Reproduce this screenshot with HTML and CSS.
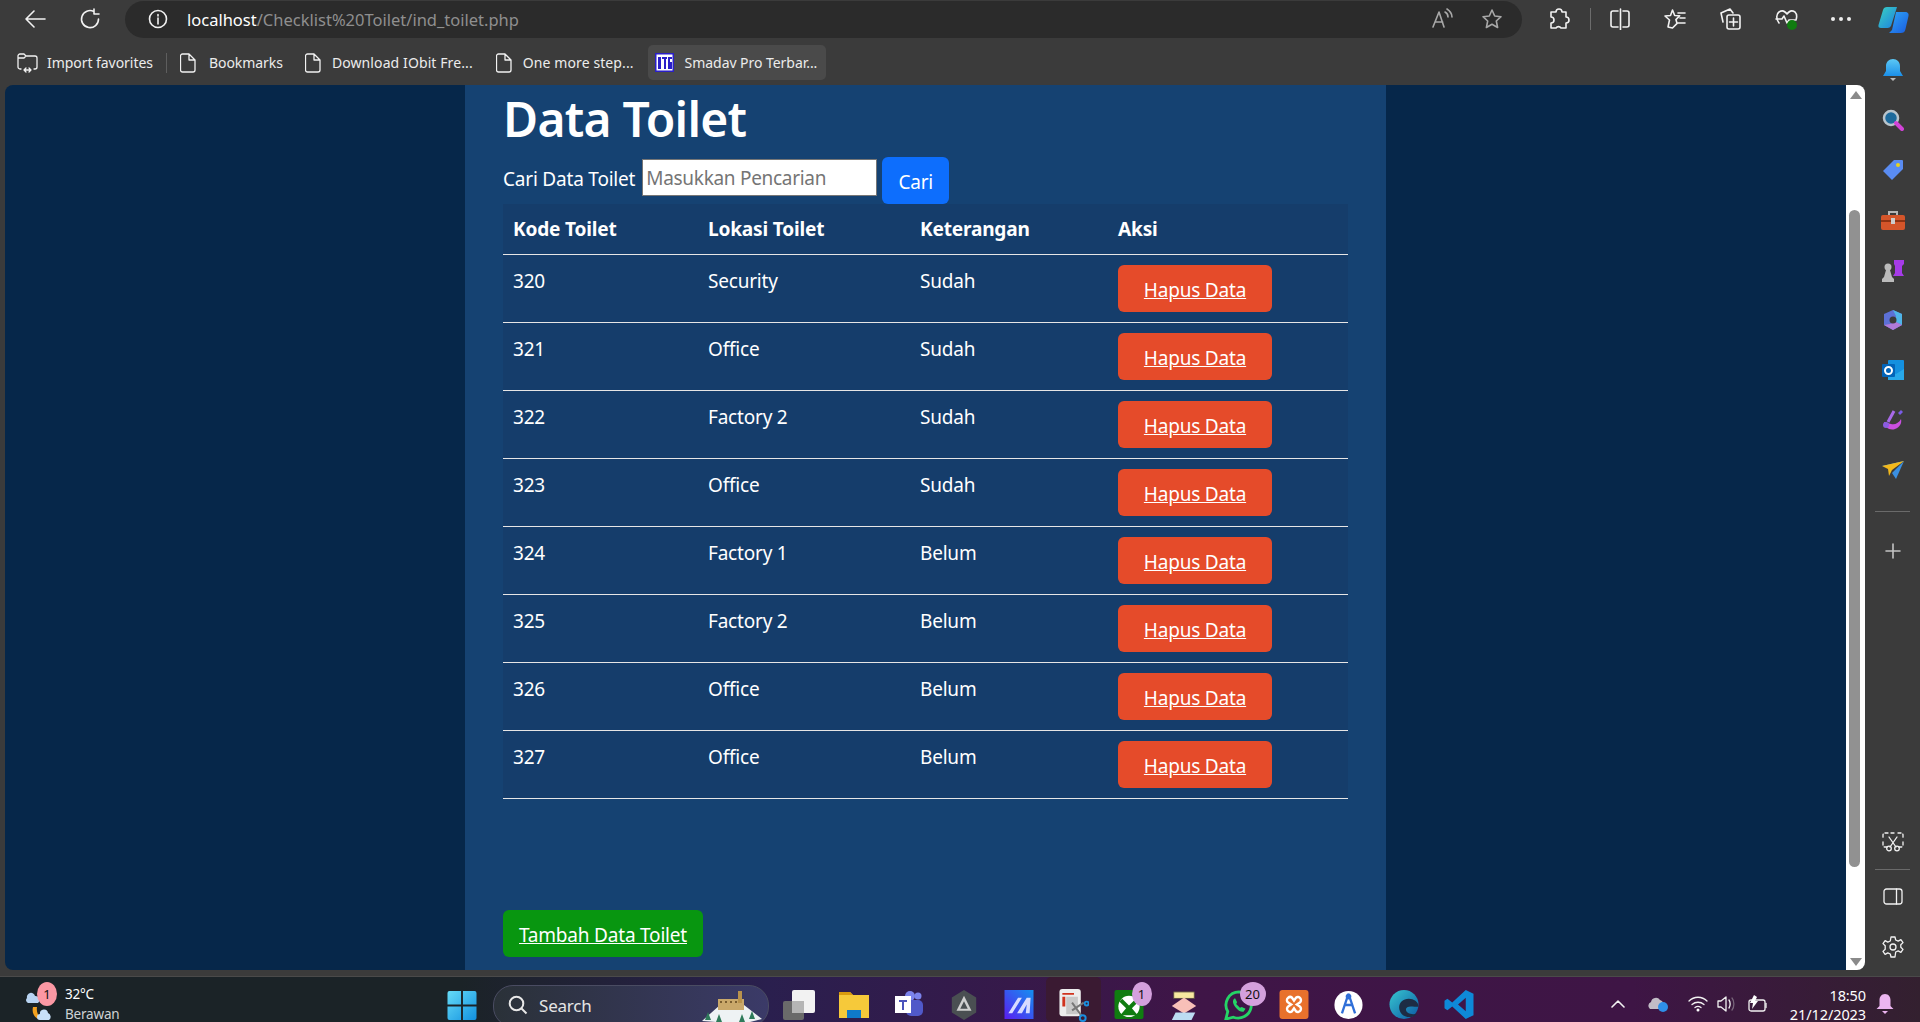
FILE: index.html
```html
<!DOCTYPE html>
<html lang="id">
<head>
<meta charset="utf-8">
<title>Data Toilet</title>
<link rel="stylesheet" href="styles.css">
</head>
<body>
<header class="toolbar">
  <button class="tb-btn nav-back"><svg width="22" height="20" viewBox="0 0 22 20"><path d="M10 2 2 10l8 8M2 10h19" class="ln"/></svg></button>
  <button class="tb-btn nav-reload"><svg width="22" height="22" viewBox="0 0 22 22"><path d="M15 3.600A8.500 8.500 0 1 0 19.500 11M15 1v5h5" class="ln"/></svg></button>
  <div class="address">
    <svg class="addr-info" width="20" height="20" viewBox="0 0 20 20"><circle cx="10" cy="10" r="8.500" class="ln"/><path d="M10 9v6M10 5.500v1.500" class="ln"/></svg>
    <span class="url"><span class="host">localhost</span>/Checklist%20Toilet/ind_toilet.php</span>
    <div class="addr-tools">
      <svg width="22" height="22" viewBox="0 0 22 22"><path d="M2 19 8 4l5 15M4.200 14h7.500M14 4c2 1 3 3 3 5M16 1c3 2 5 5 5 8" class="ln dim"/></svg>
      <svg width="22" height="22" viewBox="0 0 22 22"><path d="m11 2 2.700 6 6.300.7-4.700 4.300 1.300 6.500L11 16.300 5.400 19.500 6.700 13 2 8.700 8.300 8z" class="ln dim"/></svg>
    </div>
  </div>
  <div class="tools">
    <svg width="22" height="22" viewBox="0 0 22 22"><path d="M8 4a3 3 0 0 1 6 0h4v5a3 3 0 0 1 0 6v5h-5a3 3 0 0 0-5 0H3v-5a3 3 0 0 0 0-6V4z" class="ln"/></svg>
    <span class="tool-sep"></span>
    <svg width="22" height="22" viewBox="0 0 22 22"><path d="M9 3H4a2 2 0 0 0-2 2v12a2 2 0 0 0 2 2h5M14 3h4a2 2 0 0 1 2 2v12a2 2 0 0 1-2 2h-4M11.500 1v21" class="ln"/></svg>
    <svg width="24" height="24" viewBox="0 0 24 24"><path d="m9.500 3 2.200 5.500 5 .3-3.800 3.800 1.200 3.800L9.500 21 5 20l1.500-7L2 9l5.500-.5zM15 6h7M17 11h5M15 16h7" class="ln"/></svg>
    <svg width="24" height="24" viewBox="0 0 24 24"><path d="M4 15 2 6l9-4 3 4M8 10a2 2 0 0 1 2-2h9a2 2 0 0 1 2 2v10a2 2 0 0 1-2 2h-9a2 2 0 0 1-2-2zM14.500 11v8M10.500 15h8" class="ln"/></svg>
    <svg width="24" height="24" viewBox="0 0 24 24"><path d="M4 16C1 12 1 7 4 5c3-2 6-1 8 2 2-3 5-4 8-2 2 2 2 5 1 8M1 12h6l2-3 3 7 2-3h6" class="ln"/><circle cx="17" cy="18" r="5" fill="#107c10"/></svg>
    <span class="dots"><i></i><i></i><i></i></span>
    <svg class="copilot" width="31" height="27" viewBox="0 0 31 27"><defs><linearGradient id="cp1" x1="0" y1="0" x2="1" y2="1"><stop offset="0" stop-color="#3ad1c2"/><stop offset="1" stop-color="#1c7fe0"/></linearGradient><linearGradient id="cp2" x1="0" y1="0" x2="1" y2="1"><stop offset="0" stop-color="#2fa8f5"/><stop offset="1" stop-color="#1a5be0"/></linearGradient></defs><path d="M9 1h10l-6 19a4 4 0 0 1-4 2H3c-2 0-3-1-2.500-3L5 4c.5-2 2-3 4-3z" fill="url(#cp1)"/><path d="M18 6h9c3 0 4 2 3.500 4l-3 13c-.7 3-2 4-5 4H11l3-3z" fill="url(#cp2)"/></svg>
  </div>
</header>

<div class="workspace">
  <div class="main-col">
    <nav class="favs">
      <span class="fav fav-import"><svg width="21" height="21" viewBox="0 0 21 21"><path d="M4 17H3a2 2 0 0 1-2-2V4a2 2 0 0 1 2-2h4l2 2h9a2 2 0 0 1 2 2v9a2 2 0 0 1-2 2h-1M1 6h6l2-2M7 18h7M7 18l2-2M7 18l2 2M14 18l-2-2M14 18l-2 2" class="ln thin"/></svg>Import favorites</span>
      <span class="fav-sep"></span>
      <span class="fav"><svg class="doc" width="16" height="20" viewBox="0 0 16 20"><path d="M2.500 1H9l6 6v10a2 2 0 0 1-2 2H2.500a2 2 0 0 1-2-2V3a2 2 0 0 1 2-2zM9 1v6h6" class="ln thin"/></svg>Bookmarks</span>
      <span class="fav fav-tight"><svg class="doc" width="16" height="20" viewBox="0 0 16 20"><path d="M2.500 1H9l6 6v10a2 2 0 0 1-2 2H2.500a2 2 0 0 1-2-2V3a2 2 0 0 1 2-2zM9 1v6h6" class="ln thin"/></svg>Download IObit Fre...</span>
      <span class="fav fav-tight"><svg class="doc" width="16" height="20" viewBox="0 0 16 20"><path d="M2.500 1H9l6 6v10a2 2 0 0 1-2 2H2.500a2 2 0 0 1-2-2V3a2 2 0 0 1 2-2zM9 1v6h6" class="ln thin"/></svg>One more step...</span>
      <span class="fav fav-active"><svg width="19" height="19" viewBox="0 0 19 19"><rect width="19" height="19" fill="#2a1fc8"/><rect x="1.500" y="1.500" width="16" height="16" fill="#fff"/><path d="M3 4h3v12H3zM7 4h5v2h-1v10H9V6H7zM13 4h4v2h-2v3h2v7h-4z" fill="#2a1fc8"/></svg>Smadav Pro Terbar...</span>
    </nav>
    <div class="view-row">
      <main class="viewport">
        <section class="sheet">
          <h1 class="title">Data Toilet</h1>
          <form class="search">
            <label class="search-label" for="q">Cari Data Toilet</label>
            <input class="search-input" id="q" type="text" placeholder="Masukkan Pencarian">
            <button class="btn btn-blue" type="button">Cari</button>
          </form>
          <table class="data">
            <thead><tr><th>Kode Toilet</th><th>Lokasi Toilet</th><th>Keterangan</th><th>Aksi</th></tr></thead>
            <tbody>
              <tr><td>320</td><td>Security</td><td>Sudah</td><td><a class="btn btn-red" href="#">Hapus Data</a></td></tr>
              <tr><td>321</td><td>Office</td><td>Sudah</td><td><a class="btn btn-red" href="#">Hapus Data</a></td></tr>
              <tr><td>322</td><td>Factory 2</td><td>Sudah</td><td><a class="btn btn-red" href="#">Hapus Data</a></td></tr>
              <tr><td>323</td><td>Office</td><td>Sudah</td><td><a class="btn btn-red" href="#">Hapus Data</a></td></tr>
              <tr><td>324</td><td>Factory 1</td><td>Belum</td><td><a class="btn btn-red" href="#">Hapus Data</a></td></tr>
              <tr><td>325</td><td>Factory 2</td><td>Belum</td><td><a class="btn btn-red" href="#">Hapus Data</a></td></tr>
              <tr><td>326</td><td>Office</td><td>Belum</td><td><a class="btn btn-red" href="#">Hapus Data</a></td></tr>
              <tr><td>327</td><td>Office</td><td>Belum</td><td><a class="btn btn-red" href="#">Hapus Data</a></td></tr>
            </tbody>
          </table>
          <a class="btn btn-green" href="#">Tambah Data Toilet</a>
        </section>
      </main>
      <div class="scrollbar">
        <span class="arrow arrow-up"></span>
        <span class="track"><span class="thumb"></span></span>
        <span class="arrow arrow-down"></span>
      </div>
    </div>
  </div>
  <aside class="sidebar">
    <div class="side-group">
      <svg width="22" height="24" viewBox="0 0 22 24"><defs><linearGradient id="bell" x1="0" y1="0" x2="0" y2="1"><stop offset="0" stop-color="#5cc8f5"/><stop offset="1" stop-color="#1b8fe8"/></linearGradient></defs><path d="M11 1c4 0 7 3 7 7v5l3 5H1l3-5V8c0-4 3-7 7-7z" fill="url(#bell)"/><path d="M8 20h6l-3 3z" fill="#bbb"/></svg>
      <svg width="22" height="22" viewBox="0 0 22 22"><circle cx="9" cy="9" r="7" fill="#1d6a9c" stroke="#b8c4cc" stroke-width="2.500"/><path d="m14 14 6 6" stroke="#d243d8" stroke-width="4" stroke-linecap="round"/></svg>
      <svg width="22" height="22" viewBox="0 0 22 22"><path d="M12 1h8a1 1 0 0 1 1 1v8L10 21 1 12z" fill="#5a8cf2"/><circle cx="16" cy="6" r="2" fill="#e8d21c"/></svg>
      <svg width="24" height="20" viewBox="0 0 24 20"><path d="M8 5V2h8v3" fill="none" stroke="#b5b5b5" stroke-width="2"/><rect y="5" width="24" height="15" rx="2" fill="#d4552a"/><rect y="10" width="24" height="2" fill="#8e3313"/><rect x="10" y="8" width="4" height="6" fill="#ccc"/></svg>
      <svg width="24" height="24" viewBox="0 0 24 24"><path d="M13 2h10v4l-2 2v7l2 3H12l2-3V8l-1-2z" fill="#a63be8"/><circle cx="7" cy="9" r="3.500" fill="#bbb"/><path d="M5 12h4l2 7 2 2v3H1v-3l2-2z" fill="#bbb"/></svg>
      <svg width="22" height="22" viewBox="0 0 22 22"><path d="M11 1 20 5v11l-9 5-9-5V5z" fill="#5c70d6"/><path d="M11 1 20 5v11l-6-3V7z" fill="#4fb4e8"/><path d="M2 16l9 5 9-5-6-3-6 2z" fill="#b07ad8"/><circle cx="11" cy="11" r="3.500" fill="#3b3b3b"/></svg>
      <svg width="22" height="22" viewBox="0 0 22 22"><rect x="6" y="1" width="16" height="20" rx="1" fill="#1490df"/><path d="m6 10 8 5 8-5v11H6z" fill="#28a8ea"/><rect y="5" width="13" height="13" rx="1" fill="#0364b8"/><circle cx="6.500" cy="11.500" r="3.500" fill="none" stroke="#fff" stroke-width="2"/></svg>
      <svg width="22" height="22" viewBox="0 0 22 22"><path d="M2 13c0 5 6 9 11 7 5-2 7-6 6-10-2 4-6 6-10 5z" fill="#c94fe0"/><path d="m6 13 6-11" stroke="#a86ae8" stroke-width="3"/><circle cx="4" cy="16" r="3" fill="#8a5ce0"/><path d="m16 4 3-3 2 2-3 3z" fill="#7a5ce8"/></svg>
      <svg width="22" height="18" viewBox="0 0 22 18"><path d="M0 5 22 0 14 5z" fill="#48a8ee"/><path d="M22 0 14 18l-4-6z" fill="#3b8fe0"/><path d="M0 5 22 0 10 9l-3 6-1-7z" fill="#f2b81c"/></svg>
    </div>
    <span class="side-div side-div-top"></span>
    <svg class="side-plus" width="16" height="16" viewBox="0 0 16 16"><path d="M8 1v14M1 8h14" class="ln dim2"/></svg>
    <div class="side-group side-bottom">
      <svg width="22" height="20" viewBox="0 0 22 20"><path d="M6 1H3a2 2 0 0 0-2 2v3M16 1h3a2 2 0 0 1 2 2v3M1 10v3a2 2 0 0 0 2 2h2M21 10v3a2 2 0 0 1-2 2h-2M9 1h4" class="ln thin dash"/><path d="m7 5 7 10M15 5 8 15" class="ln thin"/><circle cx="7" cy="16.500" r="2.300" class="ln thin"/><circle cx="15" cy="16.500" r="2.300" class="ln thin"/></svg>
    </div>
    <span class="side-div"></span>
    <div class="side-group side-last">
      <svg width="20" height="18" viewBox="0 0 20 18"><rect x="1" y="1" width="18" height="15" rx="2.500" class="ln thin"/><path d="M13.500 1v15" class="ln thin"/></svg>
      <svg width="22" height="22" viewBox="0 0 22 22"><path d="M9 1h4l.7 3 2.500 1.100 2.700-1.500 2.100 3-2.200 2.200v2.400l2.200 2.200-2.100 3-2.700-1.500-2.500 1.100L13 21H9l-.7-3-2.500-1.100-2.700 1.500-2.100-3 2.200-2.200V9.800L1 7.600l2.100-3 2.700 1.500 2.500-1.100z" class="ln thin"/><circle cx="11" cy="11" r="3" class="ln thin"/></svg>
    </div>
  </aside>
</div>

<footer class="taskbar">
  <div class="weather">
    <span class="w-icon">
      <svg width="34" height="34" viewBox="0 0 34 34"><path d="M3 9a4 4 0 0 1 8-2 4 4 0 0 1 3 7H4a3 3 0 0 1-1-5z" fill="#b8d4f2"/><path d="M9 18c-2 8 4 14 12 13-6-2-9-7-8-13z" fill="#f4a11e"/><path d="M16 25a4 4 0 0 1 8-1 4 4 0 0 1 1 7H16a3 3 0 0 1 0-6z" fill="#c8e0f8"/></svg>
      <span class="badge badge-pink">1</span>
    </span>
    <span class="w-text"><span class="w-temp">32°C</span><span class="w-desc">Berawan</span></span>
  </div>
  <svg class="ti-start" width="30" height="29" viewBox="0 0 30 30"><defs><linearGradient id="win" x1="0" y1="0" x2="1" y2="1"><stop offset="0" stop-color="#66dcf7"/><stop offset="1" stop-color="#1190e0"/></linearGradient></defs><path d="M0 2a2 2 0 0 1 2-2h12v14H0zM16 0h12a2 2 0 0 1 2 2v12H16zM0 16h14v14H2a2 2 0 0 1-2-2zM16 16h14v12a2 2 0 0 1-2 2H16z" fill="url(#win)"/></svg>
  <div class="search-pill">
    <svg width="20" height="20" viewBox="0 0 20 20"><circle cx="8.500" cy="8.500" r="6.800" fill="none" stroke="#e8e8e8" stroke-width="2"/><path d="m13.500 13.500 5 5" stroke="#e8e8e8" stroke-width="2"/></svg>
    <span class="pill-text">Search</span>
    <svg class="pill-art" width="64" height="32" viewBox="0 0 64 32"><path d="M2 30 20 14h24l18 14-12 3H16z" fill="#eef2f4"/><path d="M18 8h26v11H18z" fill="#c9a86a"/><rect x="38" y="0" width="4" height="12" fill="#b8924c"/><path d="M20 10h2v2h-2zM25 10h2v2h-2zM30 10h2v2h-2zM35 10h2v2h-2z" fill="#7a5e30"/><path d="m8 21 3 8H5zM19 23l3 8h-6zM42 23l3 8h-6zM52 20l3 8h-6z" fill="#2e7a5a"/></svg>
  </div>
  <div class="apps">
    <span class="slot"><svg width="32" height="30" viewBox="0 0 32 30"><rect y="11" width="21" height="19" rx="2" fill="#6a6a6a"/><rect x="9" width="23" height="23" rx="2" fill="#f2f2f2"/><rect x="9" y="11" width="12" height="12" fill="#b5b5b5"/></svg></span>
    <span class="slot"><svg width="30" height="28" viewBox="0 0 30 28"><path d="M0 2h11l3 3h16v23H0z" fill="#f6c93a"/><path d="M0 2h11l3 3H0z" fill="#d99a0e"/><rect x="8" y="20" width="14" height="8" fill="#0f79c9"/></svg></span>
    <span class="slot"><svg width="28" height="28" viewBox="0 0 28 28"><circle cx="23" cy="6" r="3.500" fill="#7b83eb"/><circle cx="15" cy="6" r="5" fill="#7b83eb"/><rect x="11" y="10" width="17" height="16" rx="5" fill="#5059c9"/><rect y="6" width="16" height="17" fill="#fff"/><path d="M4 10h8v2H9v8H7v-8H4z" fill="#4b53bc"/></svg></span>
    <span class="slot"><svg width="26" height="30" viewBox="0 0 26 32"><path d="M13 0 26 8v16l-13 8L0 24V8z" fill="#4a4f52"/><path d="M13 6 21 22H5z" fill="#d0d0d0"/><path d="M13 12 17 20H9z" fill="#4a4f52"/></svg></span>
    <span class="slot"><svg width="30" height="29" viewBox="0 0 30 30"><defs><linearGradient id="ma" x1="1" y1="0" x2="0" y2="1"><stop offset="0" stop-color="#1490f0"/><stop offset="1" stop-color="#5a1ef0"/></linearGradient></defs><rect width="30" height="30" fill="url(#ma)"/><path d="M4 24 14 8h4L8 24zM13 24 23 8h4l-1 16h-4l1-9-5 9z" fill="#d8dcff"/></svg></span>
    <span class="slot slot-active"><svg width="30" height="33" viewBox="0 0 30 34"><rect width="22" height="28" rx="3" fill="#ededed"/><path d="M3 4h12v2H3zM3 8h3v10H3z" fill="#d0331e"/><rect x="7" y="8" width="12" height="18" fill="#c8c8c8"/><path d="m13 22 12-8M13 14l10 14" stroke="#777" stroke-width="2"/><circle cx="24" cy="30" r="3" fill="none" stroke="#1a8fe0" stroke-width="2"/><circle cx="28" cy="15" r="2" fill="none" stroke="#1a8fe0" stroke-width="2"/></svg></span>
    <span class="slot"><span class="ti-badged"><svg width="30" height="29" viewBox="0 0 30 30"><rect width="30" height="30" rx="2" fill="#107c10"/><circle cx="15" cy="17" r="11" fill="#fff"/><path d="m8 9 7 7 7-7 3 3-7 7 6 7H6l6-7-7-7z" fill="#107c10"/></svg><span class="badge badge-lilac">1</span></span></span>
    <span class="slot"><svg width="28" height="30" viewBox="0 0 28 32"><path d="M3 2h22v7H3z" fill="#f8e9a0" stroke="#5a4a40"/><path d="m14 8 13 9-13 8-13-8z" fill="#f8c0b8"/><path d="M5 24h21l-4 8H1z" fill="#bcdcf2"/></svg></span>
    <span class="slot"><span class="ti-badged"><svg width="30" height="30" viewBox="0 0 30 32"><path d="M15 2a14 14 0 0 0-12 21L1 31l8-2A14 14 0 1 0 15 2z" fill="none" stroke="#25d366" stroke-width="3"/><path d="M10 9c-2 2-2 5 1 9s7 6 9 5l2-3-4-2-2 1-4-4 1-2-2-4z" fill="#25d366"/></svg><span class="badge badge-lilac badge-wide">20</span></span></span>
    <span class="slot"><svg width="30" height="29" viewBox="0 0 30 30"><rect width="30" height="30" rx="3" fill="#e8712c"/><path d="M9 8a3 3 0 0 1 4 0l2 3 2-3a3 3 0 1 1 4 5l-3 2 3 2a3 3 0 1 1-4 5l-2-3-2 3a3 3 0 1 1-4-5l3-2-3-2a3 3 0 0 1 0-5z" fill="none" stroke="#fff" stroke-width="2.500"/></svg></span>
    <span class="slot"><svg width="29" height="30" viewBox="0 0 30 32"><circle cx="15" cy="16" r="15" fill="#fff"/><path d="M15 4 8 25M15 4l7 21M10 16h10" fill="none" stroke="#2f6fd8" stroke-width="2.500"/><circle cx="15" cy="7" r="3" fill="#2f6fd8"/></svg></span>
    <span class="slot"><svg width="30" height="29" viewBox="0 0 30 30"><defs><linearGradient id="edge" x1="0" y1="0" x2="1" y2="1"><stop offset="0" stop-color="#37c6d0"/><stop offset="1" stop-color="#0c59a4"/></linearGradient></defs><circle cx="15" cy="15" r="15" fill="url(#edge)"/><path d="M30 17c0-5-5-8-10-8-6 0-10 4-10 9s4 10 11 10c2 0 6-1 8-4-4 2-12 1-12-4 0-2 2-3 5-3 4 0 8 1 8 0z" fill="#1d2c44"/></svg></span>
    <span class="slot"><svg width="30" height="29" viewBox="0 0 30 30"><path d="M22 0 30 4v22l-8 4L8 17l-5 4-3-2V11l3-2 5 4zM22 8l-8 7 8 7z" fill="#0e89d8"/></svg></span>
  </div>
  <div class="tray">
    <svg class="tr-chev" width="14" height="8" viewBox="0 0 14 8"><path d="m1 7 6-6 6 6" class="ln"/></svg>
    <svg class="tr-cloud" width="22" height="16" viewBox="0 0 22 16"><path d="M3 13a4 4 0 0 1 1-7 5 5 0 0 1 9-2 4 4 0 0 1 3 5v4z" fill="#c2bcc6"/><circle cx="16" cy="11" r="5" fill="#2f8fe8"/></svg>
    <svg class="tr-wifi" width="20" height="16" viewBox="0 0 20 16"><path d="M1 5c5-5 13-5 18 0M4 8.500c3.500-3 8.500-3 12 0M7 11.500c2-1.500 4-1.500 6 0" class="ln thin"/><circle cx="10" cy="14" r="1.500" fill="#fff"/></svg>
    <svg class="tr-vol" width="20" height="18" viewBox="0 0 20 18"><path d="M1 6h3l5-4v14l-5-4H1z" class="ln thin"/><path d="M12 5c1.500 2 1.500 6 0 8" class="ln thin"/><path d="M15 3c2.500 3 2.500 9 0 12" class="ln thin faint"/></svg>
    <svg class="tr-batt" width="20" height="18" viewBox="0 0 20 18"><rect x="1" y="5" width="16" height="11" rx="2" class="ln thin"/><path d="M18 8.500v4" class="ln thin"/><path d="M6 0 2 8h3l-1 6 6-8H7l2-4z" fill="#fff"/></svg>
    <span class="clock"><span>18:50</span><span>21/12/2023</span></span>
    <svg class="tr-bell" width="18" height="20" viewBox="0 0 18 20"><path d="M9 0c3.500 0 5.500 3 5.500 6v6l3 3H.5l3-3V6C3.500 3 5.500 0 9 0z" fill="#ecb5f0"/><path d="M6 17h6l-3 3z" fill="#ecb5f0"/></svg>
  </div>
</footer>
</body>
</html>
```
FILE: styles.css
```css
* { box-sizing: border-box; }
html, body { margin: 0; height: 1022px; overflow: hidden; }
body {
  display: flex;
  flex-direction: column;
  background: #3b3b3b;
  color: #fff;
  font-family: "Noto Sans", "Liberation Sans", sans-serif;
}
svg { flex: none; }
.ln { fill: none; stroke: #f2f2f2; stroke-width: 1.6; stroke-linecap: round; stroke-linejoin: round; }
.ln.dim { stroke: #a8a8a8; }
.ln.dim2 { stroke: #c4c4c4; }
.ln.thin { stroke-width: 1.3; }
.ln.faint { stroke: #77657a; }
.ln.dash { stroke-dasharray: 3 2; }

/* top toolbar */
.toolbar { display: flex; align-items: center; height: 38px; flex: none; }
.tb-btn { border: 0; padding: 0; background: none; display: flex; }
.nav-back { margin-left: 24px; }
.nav-reload { margin-left: 33px; }
.address {
  display: flex;
  flex: none;
  align-items: center;
  width: 1397px;
  height: 37px;
  margin-left: 24px;
  padding: 0 19px 0 23px;
  background: #2b2b2b;
  border-radius: 19px;
}
.url { margin-left: 19px; font-size: 16.500px; color: #8f8f8f; }
.host { color: #fff; }
.addr-tools { margin-left: auto; display: flex; gap: 28px; }
.tools { display: flex; align-items: center; margin-left: 26px; gap: 32px; flex: 1; }
.tool-sep { width: 1px; height: 22px; background: #6c6c6c; margin: 0 -14px 0 -12px; }
.dots { display: flex; gap: 4px; }
.dots i { width: 4px; height: 4px; border-radius: 50%; background: #eee; }
.copilot { margin-left: -5px; }

/* below toolbar */
.workspace { display: flex; flex: none; height: 938px; }
.main-col { width: 1865px; display: flex; flex-direction: column; }
.favs { height: 47px; padding: 2px 0 0 17px; display: flex; align-items: center; flex: none; font-size: 14px; color: #ececec; }
.fav { display: flex; align-items: center; gap: 13px; letter-spacing: -.05px; white-space: nowrap; margin-right: 22px; }
.fav-tight { gap: 11px; margin-right: 23px; letter-spacing: .1px; }
.fav-import { gap: 9px; margin-right: 13px; }
.fav-sep { width: 1px; height: 20px; background: #5e5e5e; margin-right: 13px; }
.fav-active { gap: 11px; height: 35px; padding: 0 9px 0 7px; margin: 0 0 0 -9px; background: #4a4a4a; border-radius: 5px; }

.view-row { display: flex; height: 885px; margin-left: 5px; flex: none; border-radius: 8px; overflow: hidden; }
.viewport { flex: 1; background: #06274a; overflow: hidden; }
.sheet { width: 921px; height: 100%; margin: 0 auto; padding: 0 38px; background: #154272; display: flex; flex-direction: column; align-items: flex-start; }
.title { margin: 0; height: 70px; font-size: 48px; font-weight: 600; line-height: 68px; letter-spacing: -.75px; white-space: nowrap; }
.search { display: flex; align-items: flex-start; height: 47px; margin-top: 2px; font-size: 19px; }
.search-label { margin-top: 9px; line-height: 27px; letter-spacing: -.2px; }
.search-input {
  width: 235px;
  height: 37px;
  margin: 2px 5px 0 7px;
  padding: 0 3px;
  border: 1px solid #767676;
  background: #fff;
  font: inherit;
  letter-spacing: -.3px;
  border-radius: 0;
}
.search-input::placeholder { color: #757575; opacity: 1; }

.btn { display: inline-block; border: 0; border-radius: 6px; height: 47px; line-height: 50px; font-size: 19px; color: #fff; font-family: inherit; text-align: center; letter-spacing: -.2px; }
.btn-blue { width: 67px; background: #0d6efd; padding: 2px 0 0; line-height: 47px; }
.btn-red { width: 154px; background: #e54b2a; }
.btn-green { width: 200px; background: #089610; margin-top: 111px; }

.data { width: 845px; border-collapse: collapse; table-layout: fixed; background: #153d6b; font-size: 19px; letter-spacing: -.2px; }
.data th, .data td { padding: 0 10px; border-bottom: 1px solid #e6e6e6; text-align: left; vertical-align: top; }
.data th { height: 50px; line-height: 50px; font-weight: 700; font-size: 19.100px; }
.data td { height: 68px; padding-top: 10px; line-height: 32px; }
.data td .btn { line-height: 51px; }
.data th:nth-child(1) { width: 195px; }
.data th:nth-child(2) { width: 212px; }
.data th:nth-child(3) { width: 198px; }

.scrollbar { width: 19px; flex: none; background: #fff; display: flex; flex-direction: column; align-items: center; padding: 6px 0 4px 0; }
.arrow { width: 0; height: 0; border-left: 6px solid transparent; border-right: 6px solid transparent; flex: none; }
.arrow-up { border-bottom: 8px solid #8a8a8a; }
.arrow-down { border-top: 8px solid #8a8a8a; }
.track { flex: 1; width: 11px; display: flex; padding-top: 111px; padding-bottom: 91px; margin: 0 0 0 -2px; }
.thumb { flex: 1; background: #919191; border-radius: 6px; }

.sidebar { width: 55px; flex: none; display: flex; flex-direction: column; align-items: center; padding: 7px 0 4px; }
.side-group { display: grid; grid-auto-rows: 50px; justify-items: center; align-items: center; }
.side-div { width: 35px; height: 1px; flex: none; background: #6a6a6a; margin: 2px 0; }
.side-div-top { margin: 16px 0 0; }
.side-plus { margin-top: 31px; }
.side-bottom { margin-top: auto; }

/* taskbar */
.taskbar {
  flex: none;
  height: 46px;
  display: flex;
  align-items: flex-start;
  border-top: 1px solid #4a4a4a;
  background: linear-gradient(90deg, #1b2327 0, #1b2327 24%, #2a1f4e 40%, #3f1547 62%, #3e1545 85%, #33202f 100%);
  overflow: hidden;
}
.weather { display: flex; align-items: flex-start; width: 447px; padding: 7px 0 0 24px; flex: none; }
.w-icon { position: relative; display: flex; margin-top: 5px; }
.badge { position: absolute; display: flex; align-items: center; justify-content: center; width: 20px; height: 20px; border-radius: 50%; color: #111; font-size: 13px; }
.badge-pink { background: #fb98a4; left: 13px; top: -7px; height: 24px; }
.badge-lilac { background: #d4a0dd; right: -8px; top: -8px; width: 20px; height: 24px; }
.badge-wide { width: 26px; right: -12px; }
.w-text { display: flex; flex-direction: column; gap: 4px; margin: 2px 0 0 7px; font-size: 13.500px; line-height: 16px; letter-spacing: -.2px; }
.w-desc { color: #cfd2d4; }
.ti-start { margin-top: 14px; }
.search-pill {
  display: flex; align-items: flex-start; flex: none;
  width: 276px; height: 42px; margin: 8px 0 0 16px; padding: 9px 0 0 14px;
  border-radius: 20px;
  background: linear-gradient(90deg, #2a3138, #3b3a68);
  border: 1px solid #4a4c62;
  font-size: 17px; color: #e5e5e5;
}
.pill-text { margin-left: 11px; letter-spacing: -.2px; line-height: 22px; }
.pill-art { margin: -4px 4px 0 auto; }
.apps { display: flex; margin-left: 2px; flex: none; }
.slot { width: 55px; height: 45px; padding-top: 13px; display: flex; justify-content: center; align-items: flex-start; }
.slot-active { background: #3a1a32; border-radius: 5px; padding-top: 12px; }
.ti-badged { position: relative; display: flex; }
.tray { margin-left: auto; margin-right: 26px; height: 45px; display: flex; align-items: center; font-size: 14.500px; padding-top: 9px; }
.tr-cloud { margin-left: 22px; }
.tr-wifi { margin-left: 19px; }
.tr-vol { margin-left: 9px; }
.tr-batt { margin-left: 11px; }
.clock { display: flex; flex-direction: column; align-items: flex-end; gap: 3px; line-height: 16px; margin-left: 19px; margin-right: 10px; width: 79px; letter-spacing: -.1px; white-space: nowrap; }
```
